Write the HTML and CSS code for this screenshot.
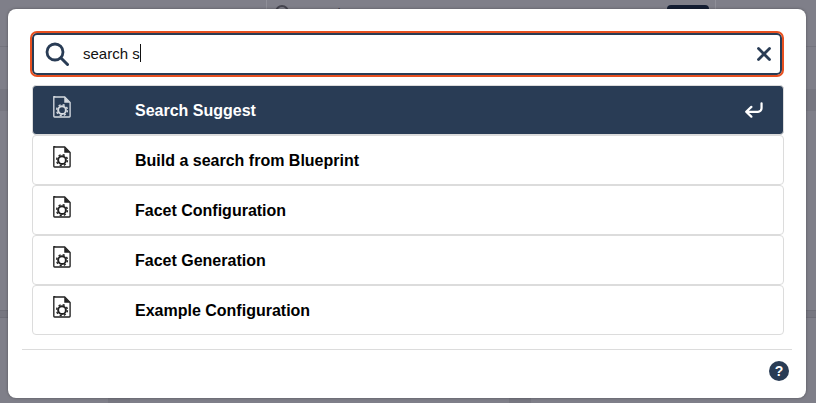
FILE: index.html
```html
<!DOCTYPE html>
<html>
<head>
	<title>Search</title>
	<link rel="stylesheet" href="styles.css">
</head>
<body>
	<svg width="0" height="0" class="defs">
		<symbol id="doc" viewBox="0 0 20 24">
			<path d="M1.800 .9h11.200l6 6v15.300a.9 .9 0 0 1-.9 .9h-16.300a.9 .9 0 0 1-.9-.9v-21.400a.9 .9 0 0 1 .9-.9z" fill="none" stroke="currentColor" stroke-width="1.500"/>
			<path d="M12.500 .9v6.500h6.500z" fill="currentColor"/>
			<circle cx="10" cy="15.500" r="4.300" fill="none" stroke="currentColor" stroke-width="2.200"/>
			<circle cx="10" cy="15.500" r="6" fill="none" stroke="currentColor" stroke-width="1.600" stroke-dasharray="2.360 2.360"/>
		</symbol>
	</svg>

	<div class="backdrop">
		<div class="bg-search">
			<span class="bg-lens"></span>
			<span class="bg-text">Search</span>
			<span class="bg-button"></span>
		</div>
		<div class="bg-line"></div>
		<div class="bg-band bg-band-top"></div>
		<div class="bg-band bg-band-low"></div>
		<div class="bg-col bg-col-left"></div>
		<div class="bg-col bg-col-right"></div>
	</div>

	<div class="modal">
		<div class="search-box">
			<svg class="search-icon" viewBox="0 0 24 24" width="24" height="24">
				<circle cx="10" cy="10" r="8" fill="none" stroke="#293c55" stroke-width="2.800"/>
				<path d="M16 16l6.500 6.500" stroke="#293c55" stroke-width="3" stroke-linecap="round"/>
			</svg>
			<div class="search-text">search s<span class="caret"></span></div>
			<svg class="clear-icon" viewBox="0 0 14 14" width="14" height="14">
				<path d="M1.500 1.500l11 11M12.500 1.500l-11 11" stroke="#293c55" stroke-width="2.800" stroke-linecap="round"/>
			</svg>
		</div>

		<div class="results">
			<div class="result active">
				<svg class="doc-icon" width="18" height="22"><use href="#doc"/></svg>
				<span class="label">Search Suggest</span>
				<svg class="enter-icon" viewBox="0 0 20 18" width="18" height="16">
					<path d="M18.500 1.500v5.500a4 4 0 0 1-4 4h-13M7 5.500l-5.800 5.500 5.800 5.500" fill="none" stroke="#fff" stroke-width="2.500" stroke-linecap="round" stroke-linejoin="round"/>
				</svg>
			</div>
			<div class="result">
				<svg class="doc-icon" width="18" height="22"><use href="#doc"/></svg>
				<span class="label">Build a search from Blueprint</span>
			</div>
			<div class="result">
				<svg class="doc-icon" width="18" height="22"><use href="#doc"/></svg>
				<span class="label">Facet Configuration</span>
			</div>
			<div class="result">
				<svg class="doc-icon" width="18" height="22"><use href="#doc"/></svg>
				<span class="label">Facet Generation</span>
			</div>
			<div class="result">
				<svg class="doc-icon" width="18" height="22"><use href="#doc"/></svg>
				<span class="label">Example Configuration</span>
			</div>
		</div>

		<div class="footer">
			<span class="help">?</span>
		</div>
	</div>
</body>
</html>
```
FILE: styles.css
```css
* {
	margin: 0;
	padding: 0;
	box-sizing: border-box;
}

html, body {
	height: 100%;
	overflow: hidden;
}

body {
	background-color: #7f7f89;
	font-family: "Liberation Sans", Arial, sans-serif;
	padding: 9px 10px 5px 8px;
}

.defs {
	position: absolute;
}

/* dimmed page behind the dialog */
.backdrop {
	position: absolute;
	inset: 0;
}

.bg-search {
	position: absolute;
	left: 266px;
	top: -10px;
	width: 450px;
	height: 30px;
	border: 1px solid #8f8f98;
	border-radius: 4px;
}

.bg-lens {
	position: absolute;
	left: 8px;
	top: 14px;
	width: 14px;
	height: 14px;
	border: 2px solid #45454f;
	border-radius: 50%;
}

.bg-text {
	position: absolute;
	left: 34px;
	top: 15px;
	font-size: 14px;
	color: #45454f;
}

.bg-button {
	position: absolute;
	right: 6px;
	top: 14px;
	width: 42px;
	height: 14px;
	background-color: #141e33;
	border-radius: 4px;
}

.bg-line {
	position: absolute;
	left: 0;
	right: 0;
	top: 46px;
	height: 1px;
	background-color: #74747e;
}

.bg-band {
	position: absolute;
	left: 0;
	right: 0;
	background-color: #777781;
}

.bg-band-top {
	top: 89px;
	height: 22px;
}

.bg-band-low {
	top: 310px;
	height: 8px;
	border-top: 1px solid #6f6f79;
	border-bottom: 1px solid #6f6f79;
}

.bg-col {
	position: absolute;
	bottom: 0;
	width: 22px;
	height: 20px;
	background-color: #777781;
}

.bg-col-left {
	left: 108px;
}

.bg-col-right {
	left: 509px;
}

.modal {
	position: relative;
	width: 798px;
	height: 389px;
	background-color: #fff;
	border-radius: 8px;
	box-shadow: 0 0 3px rgba(0, 0, 0, .35);
	padding: 24px 14px 0;
	display: flex;
	flex-direction: column;
}

.search-box {
	height: 42px;
	width: 750px;
	margin-left: 10px;
	border: 2px solid #293c55;
	border-radius: 5px;
	outline: 2px solid #e8501f;
	display: flex;
	align-items: center;
	padding: 0 10px;
}

.search-icon {
	flex: none;
	margin: -1px 0 0 1px;
}

.search-text {
	flex: 1;
	margin: -2px 0 0 14px;
	font-size: 15px;
	color: #111;
	display: flex;
	align-items: center;
}

.caret {
	display: inline-block;
	width: 1px;
	height: 18px;
	background-color: #111;
}

.clear-icon {
	flex: none;
	margin-right: -1px;
}

.results {
	margin: 10px 0 0 10px;
	width: 752px;
	display: flex;
	flex-direction: column;
}

.result {
	height: 50px;
	border: 1px solid #dcdcdc;
	border-radius: 4px;
	display: flex;
	align-items: center;
	color: #000;
}

.result.active {
	background-color: #293c55;
	color: #fff;
}

.doc-icon {
	flex: none;
	margin: -7px 0 0 20px;
	color: #222;
}

.active .doc-icon {
	color: #d5dae0;
}

.label {
	flex: 1;
	margin-left: 64px;
	padding-top: 2px;
	font-size: 16px;
	font-weight: bold;
}

.enter-icon {
	flex: none;
	margin-right: 20px;
}

.footer {
	margin-top: 14px;
	border-top: 1px solid #dcdcdc;
	display: flex;
	justify-content: flex-end;
	padding: 11px 3px 0 0;
}

.help {
	width: 20px;
	height: 20px;
	border-radius: 50%;
	background-color: #293c55;
	color: #fff;
	font-size: 14px;
	font-weight: bold;
	display: flex;
	align-items: center;
	justify-content: center;
}
```
